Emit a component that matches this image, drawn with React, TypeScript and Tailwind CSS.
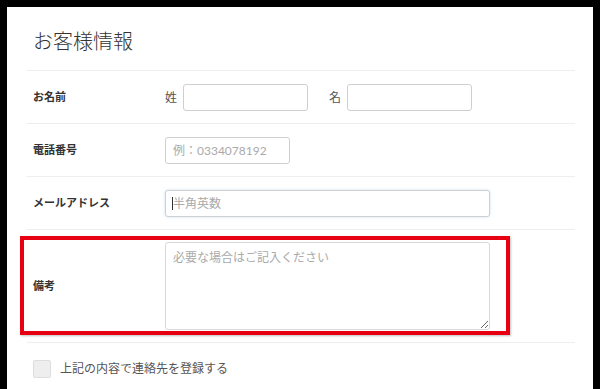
const font = { fontFamily: 'Lato, "Noto Sans CJK JP", sans-serif' };

function Label({ children }: { children: React.ReactNode }) {
  return <div className="w-[132px] shrink-0 text-[11px] font-bold text-[#333]">{children}</div>;
}

const inputCls =
  "h-[27px] rounded-[3px] border border-[#cfcfcf] bg-white px-[7px] text-[12px] text-[#333] outline-none placeholder:text-[#aaa]";

export default function App() {
  return (
    <div className="min-h-[389px] w-[600px] bg-black pl-[7px] pr-[7px] pt-[7px]" style={font}>
      <div className="h-[382px] overflow-hidden bg-white pl-[20px] pr-[18px]">
        {/* Title */}
        <div className="border-b border-[#eeeeee] pb-[15px] pt-[20px]">
          <h1 className="pl-[6px] text-[20px] font-light leading-[28px] text-[#333]">お客様情報</h1>
        </div>

        {/* Name */}
        <div className="flex items-center border-b border-[#eeeeee] pb-[12px] pl-[6px] pt-[13px]">
          <Label>お名前</Label>
          <span className="w-[18px] text-[12px] text-[#555]">姓</span>
          <input className={`${inputCls} w-[125px]`} />
          <span className="ml-[21px] w-[18px] text-[12px] text-[#555]">名</span>
          <input className={`${inputCls} w-[125px]`} />
        </div>

        {/* Phone */}
        <div className="flex items-center border-b border-[#eeeeee] pb-[12px] pl-[6px] pt-[13px]">
          <Label>電話番号</Label>
          <input className={`${inputCls} w-[125px]`} placeholder="例：0334078192" />
        </div>

        {/* Email */}
        <div className="flex items-center border-b border-[#eeeeee] pb-[12px] pl-[6px] pt-[13px]">
          <Label>メールアドレス</Label>
          <div className="relative">
            <input
              className={`${inputCls} w-[325px] border-[#9fc3dc] shadow-[0_0_3px_rgba(102,175,233,0.35)]`}
              placeholder="半角英数"
            />
            <span className="absolute left-[7px] top-[7px] h-[13px] w-px bg-[#333]" />
          </div>
        </div>

        {/* Notes */}
        <div className="relative flex items-center border-b border-[#eeeeee] pb-[12px] pl-[6px] pt-[12px]">
          <Label>備考</Label>
          <textarea
            className="h-[88px] w-[325px] rounded-[3px] border border-[#d8d8d8] bg-white px-[7px] py-[6px] text-[12px] leading-[18px] text-[#333] outline-none placeholder:text-[#aaa]"
            placeholder="必要な場合はご記入ください"
          />
          <div className="pointer-events-none absolute left-[-7px] top-[6px] h-[99px] w-[490px] border-[4px] border-[#e60012] shadow-[1px_1px_2px_rgba(0,0,0,0.25)]" />
        </div>

        {/* Checkbox */}
        <label className="flex items-center gap-[9px] pl-[6px] pt-[17px]">
          <span className="h-[18px] w-[18px] rounded-[2px] border border-[#dddddd] bg-[#eeeeee]" />
          <span className="text-[12px] text-[#555]">上記の内容で連絡先を登録する</span>
        </label>
      </div>
    </div>
  );
}
